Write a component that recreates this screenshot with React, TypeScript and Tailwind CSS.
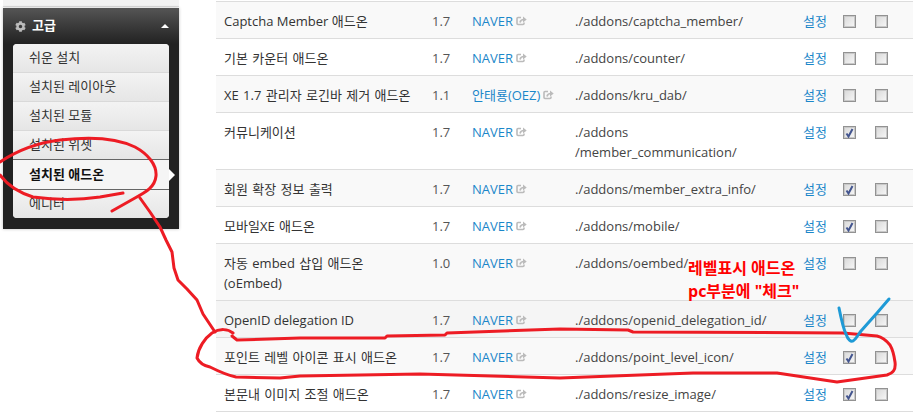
import React from "react";
import { FaCog } from "react-icons/fa";

const menu = ["쉬운 설치", "설치된 레이아웃", "설치된 모듈", "설치된 위젯", "설치된 애드온", "에디터"];

const rows = [
	{ title: "Captcha Member 애드온", version: "1.7", author: "NAVER", path: "./addons/captcha_member/", pc: false, bg: "bg-[#f9f9f9]" },
	{ title: "기본 카운터 애드온", version: "1.7", author: "NAVER", path: "./addons/counter/", pc: false, bg: "bg-white", ko: true },
	{ title: "XE 1.7 관리자 로긴바 제거 애드온", version: "1.1", author: "안태룡(OEZ)", path: "./addons/kru_dab/", pc: false, bg: "bg-[#f9f9f9]", ko: true },
	{ title: "커뮤니케이션", version: "1.7", author: "NAVER", path: "./addons\n/member_communication/", pc: true, bg: "bg-white", ko: true },
	{ title: "회원 확장 정보 출력", version: "1.7", author: "NAVER", path: "./addons/member_extra_info/", pc: true, bg: "bg-[#f9f9f9]", ko: true },
	{ title: "모바일XE 애드온", version: "1.7", author: "NAVER", path: "./addons/mobile/", pc: true, bg: "bg-white", ko: true },
	{ title: "자동 embed 삽입 애드온\n(oEmbed)", version: "1.0", author: "NAVER", path: "./addons/oembed/", pc: false, bg: "bg-[#f9f9f9]", ko: true },
	{ title: "OpenID delegation ID", version: "1.7", author: "NAVER", path: "./addons/openid_delegation_id/", pc: false, bg: "bg-[#f5f5f5]" },
	{ title: "포인트 레벨 아이콘 표시 애드온", version: "1.7", author: "NAVER", path: "./addons/point_level_icon/", pc: true, bg: "bg-[#f9f9f9]", ko: true },
	{ title: "본문내 이미지 조절 애드온", version: "1.7", author: "NAVER", path: "./addons/resize_image/", pc: true, bg: "bg-white", ko: true },
];

const Check = ({ on }: { on: boolean }) => (
	<span className="mt-[4px] flex h-[13px] w-[13px] items-center justify-center border border-[#929292] bg-gradient-to-br from-[#d8d8d8] to-[#f8f8f8] shadow-[inset_0_0_0_1px_#c9c9c9]">
		{on && (
			<svg width="9" height="10" viewBox="0 0 9 10">
				<path d="M1.5 5.5 L3.5 8.5 L7.5 1" fill="none" stroke="#43558f" strokeWidth="2" />
			</svg>
		)}
	</span>
);

const LinkIcon = () => (
	<svg className="ml-[3px]" width="11" height="10" viewBox="0 0 11 10" fill="none" stroke="#bbb">
		<path d="M5 1.5 H2 Q1 1.5 1 2.5 V7.5 Q1 8.5 2 8.5 H7 Q8 8.5 8 7.5 V6.5" strokeWidth="1.6" />
		<path d="M4 6.5 Q4.5 3.5 8 3.5" strokeWidth="1.6" />
		<path d="M7 0.5 L10.7 3.5 L7 6.5 Z" fill="#bbb" stroke="none" />
	</svg>
);

const App = () => {
	return (
		<div
			className="relative flex h-[416px] w-[913px] overflow-hidden bg-white text-[13px] text-[#333]"
			style={{ fontFamily: '"Open Sans", "Noto Sans CJK KR", sans-serif' }}
		>
			{/* Sidebar */}
			<aside className="w-[216px] shrink-0 pl-[3px]">
				<div className="h-[7px] w-[176px] border-b border-[#ddd] bg-[#f3f3f3]" />
				<div className="mt-px w-[176px] bg-[#222] pb-[11px] shadow-[0_0_3px_rgba(0,0,0,0.25)]">
					<div className="flex h-[36px] items-center bg-gradient-to-b from-[#555] to-[#222] pl-[12px] pr-[10px] font-bold text-white">
						<FaCog className="mr-[6px] text-[11px] text-[#bbb]" />
						<span>고급</span>
						<span className="ml-auto border-x-[4px] border-b-[4px] border-x-transparent border-b-white" />
					</div>
					<ul className="mx-[10px] rounded bg-[#e8e8e8]">
						{menu.map((item, i) =>
							i === 4 ? (
								<li
									key={item}
									className="relative -my-px flex h-[31px] items-center border-y border-[#666] bg-[#f5f5f5] pl-[16px] font-bold text-[#111]"
								>
									{item}
									<span className="absolute left-full top-[9px] border-y-[6px] border-l-[6px] border-y-transparent border-l-white" />
								</li>
							) : (
								<li
									key={item}
									className="flex h-[29px] items-center border-b border-[#d9d9d9] bg-gradient-to-b from-[#f3f3f3] to-[#e6e6e6] pl-[16px] first:rounded-t last:rounded-b last:border-b-0"
								>
									{item}
								</li>
							)
						)}
					</ul>
				</div>
			</aside>

			{/* Addon table */}
			<main className="flex-1 pt-px">
				{rows.map((row) => (
					<div
						key={row.path}
						className={`grid grid-cols-[208px_40px_103px_228px_40px_32px_1fr] border-t border-[#ddd] pb-[7px] pl-[8px] pt-[9px] leading-[20px] ${row.bg}`}
					>
						<div className={row.ko ? "whitespace-pre-line [word-spacing:1px]" : "whitespace-pre-line"}>{row.title}</div>
						<div className="text-[#555]">{row.version}</div>
						<div className="flex items-center self-start whitespace-nowrap text-[#1b87c9]">
							{row.author}
							<LinkIcon />
						</div>
						<div className="whitespace-pre-line text-[#444]">{row.path}</div>
						<div className="text-[#1b87c9]">설정</div>
						<div>
							<Check on={row.pc} />
						</div>
						<div>
							<Check on={false} />
						</div>
					</div>
				))}
				<div className="border-t border-[#ddd]" />
			</main>

			{/* Hand-drawn annotations */}
			<svg className="pointer-events-none absolute inset-0" width="913" height="416" fill="none" strokeLinecap="round" strokeLinejoin="round">
				<g stroke="#ed1c24" strokeWidth="3">
					<path d="M0 162 C15 152 35 143 60 140 C85 137 115 137 135 147 C148 154 157 165 156 176 C155 187 146 192 135 198 L112 211" />
					<path d="M0 175 C8 186 20 193 33 197 C55 200 80 200 100 197 L123 193" />
					<path d="M140 198 L150 212 L160 227 L166 240 L172 252 L174 268 L178 280 L187 289 L197 300 L203 314 L215 332" />
					<path d="M233 333 C228 329 220 328 212 333 C205 338 198 348 197 358 C200 364 205 366 210 367 C220 372 226 375 236 377 L280 378 L300 376 L420 374 L560 378 L693 373 L777 373 L837 382 L887 375 C893 373 896 370 895 362 C894 355 893 350 890 345 C886 340 882 337 877 336 L843 333 L633 332 L628 330 L560 329 L447 333 L445 335 L387 336 L385 338 L300 338 L237 340 L232 336" />
				</g>
				<path d="M839 308 C841 318 843 328 846 334 C848 340 851 342 853 341 C856 339 858 335 861 331 L877 313 L889 299" stroke="#1e9ad6" strokeWidth="3" />
			</svg>
			<div className="absolute left-[688px] top-[257px] whitespace-nowrap text-[16px] font-bold leading-[23px] text-[#ff0000]">
				<div>레벨표시 애드온</div>
				<div>pc부분에 "체크"</div>
			</div>
		</div>
	);
};

export default App;
